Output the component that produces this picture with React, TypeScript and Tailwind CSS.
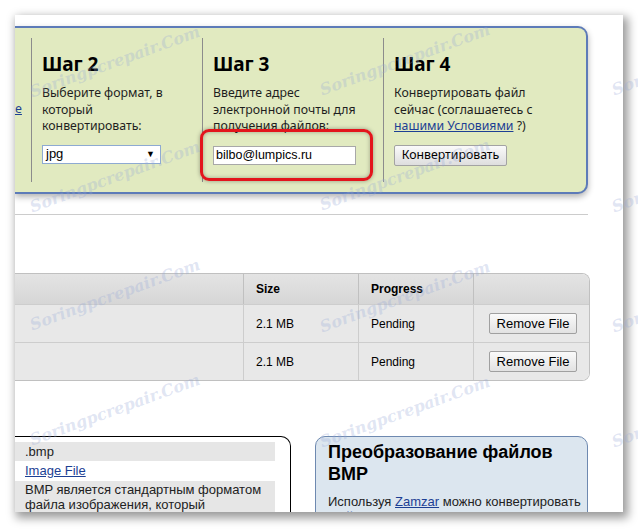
const MARKS: [number, number][] = [
  [115, 62], [115, 177], [115, 295], [115, 410],
  [405, 60], [405, 175], [405, 297], [405, 412],
  [697, 60], [697, 177], [697, 297], [697, 412],
];

const FILES = [
  { size: "2.1 MB", status: "Pending" },
  { size: "2.1 MB", status: "Pending" },
];

function Watermarks() {
  return (
    <>
      {MARKS.map(([x, y], i) => (
        <span
          key={i}
          className="pointer-events-none absolute whitespace-nowrap font-['DejaVu_Serif',serif] text-[16px] font-bold italic text-[rgba(150,168,215,0.3)]"
          style={{ left: x, top: y, transform: "translate(-50%, -50%) rotate(-20deg)" }}
        >
          Soringpcrepair.Com
        </span>
      ))}
    </>
  );
}

function StepHead({ n }: { n: number }) {
  return <h2 className="text-[19px] font-bold leading-[24px] text-black">Шаг {n}</h2>;
}

function Steps() {
  return (
    <div className="relative flex h-[168px] w-[573px] shrink-0 rounded-r-[10px] border-2 border-l-0 border-[#5d7bb8] bg-[#e1eac0] py-[10px] font-['Noto_Sans',sans-serif] text-[12.3px] leading-[16.5px] text-[#1e1e1e] shadow-[0_3px_6px_rgba(0,0,0,0.3)]">
      <div className="w-[16px] pt-[63px]">
        <a className="text-[#1c3f94] underline">e</a>
      </div>

      <div className="w-[171px] border-l border-[#8c8c8c] pl-[10px] pt-[14px]">
        <StepHead n={2} />
        <p className="mt-[9px]">
          Выберите формат, в
          <br />
          который
          <br />
          конвертировать:
        </p>
        <div className="mt-[10px] flex h-[19px] w-[119px] items-center justify-between border border-[#8eaad2] bg-white pl-[3px] pr-[5px] font-['Liberation_Sans',sans-serif] text-[13px] text-black">
          <span>jpg</span>
          <span className="text-[9px] leading-none">▼</span>
        </div>
      </div>

      <div className="w-[181px] border-l border-[#8c8c8c] pl-[10px] pt-[14px]">
        <StepHead n={3} />
        <p className="mt-[9px]">
          Введите адрес
          <br />
          электронной почты для
          <br />
          получения файлов:
        </p>
        <div className="mt-[11px] flex h-[19px] w-[143px] items-center border border-[#a8a8a8] bg-white pl-[2px] font-['Liberation_Sans',sans-serif] text-[12.5px] text-black">
          bilbo@lumpics.ru
        </div>
      </div>

      <div className="flex-1 border-l border-[#8c8c8c] pl-[10px] pt-[14px]">
        <StepHead n={4} />
        <p className="mt-[9px]">
          Конвертировать файл
          <br />
          сейчас (соглашаетесь с
          <br />
          <a className="text-[#1c3f94] underline">нашими Условиями</a> ?)
        </p>
        <button className="mt-[10px] h-[21px] w-[113px] rounded-[2px] border border-[#a3a3a3] bg-gradient-to-b from-[#fafafa] to-[#dedede] text-[12.3px] leading-none text-black">
          Конвертировать
        </button>
      </div>

      {/* red highlight drawn over the e-mail field */}
      <div className="pointer-events-none absolute left-[185px] top-[101px] h-[52px] w-[173px] rounded-[9px] border-[3px] border-[#e3151c] shadow-[0_0_4px_rgba(0,0,0,0.35),inset_0_0_4px_rgba(0,0,0,0.3)]" />
    </div>
  );
}

function FileTable() {
  const cols = "grid grid-cols-[229px_115px_115px_1fr]";
  return (
    <div className="w-[575px] shrink-0 overflow-hidden rounded-r-[8px] border border-l-0 border-[#c0c0c0] font-['Liberation_Sans',sans-serif] text-[12px] text-black">
      <div className={`${cols} h-[30px] bg-gradient-to-b from-[#e4e4e4] to-[#d6d6d6] font-bold`}>
        <div className="border-r border-[#c0c0c0]" />
        <div className="flex items-center border-r border-[#c0c0c0] pl-[12px]">Size</div>
        <div className="flex items-center border-r border-[#c0c0c0] pl-[12px]">Progress</div>
        <div />
      </div>
      {FILES.map((f, i) => (
        <div key={i} className={`${cols} h-[38px] border-t border-[#cdcdcd] bg-[#e8e8e8]`}>
          <div className="border-r border-[#cdcdcd]" />
          <div className="flex items-center border-r border-[#cdcdcd] pl-[12px]">{f.size}</div>
          <div className="flex items-center border-r border-[#cdcdcd] pl-[12px]">{f.status}</div>
          <div className="flex items-center pl-[15px]">
            <button className="h-[21px] w-[88px] rounded-[2px] border border-[#a0a0a0] bg-gradient-to-b from-[#fafafa] to-[#e2e2e2] text-[13px] leading-none">
              Remove File
            </button>
          </div>
        </div>
      ))}
    </div>
  );
}

function InfoBoxes() {
  return (
    <div className="flex shrink-0 gap-[24px] font-['Liberation_Sans',sans-serif] text-[13px] text-[#222]">
      <div className="h-[90px] w-[276px] rounded-tr-[10px] border border-l-0 border-black pr-[15px] pt-[5px]">
        <div className="bg-[#e6e6e6] pl-[10px] leading-[19px]">.bmp</div>
        <div className="pl-[10px] leading-[20px]">
          <a className="text-[#1c3f94] underline">Image File</a>
        </div>
        <div className="bg-[#e6e6e6] pl-[10px] pt-[1px] leading-[15px]">
          BMP является стандартным форматом
          <br />
          файла изображения, который
        </div>
      </div>

      <div className="h-[90px] w-[273px] rounded-[10px] border border-[#6e89b0] bg-[#dce6ef] pl-[12px] pt-[4px]">
        <h3 className="text-[18px] font-bold leading-[22px] text-black">
          Преобразование файлов
          <br />
          BMP
        </h3>
        <p className="mt-[9px] leading-[15px]">
          Используя <a className="text-[#1c3f94] underline">Zamzar</a> можно конвертировать
          <br />
          <a className="text-[#1c3f94] underline">файлы BMP</a> во множество других
        </p>
      </div>
    </div>
  );
}

export default function App() {
  return (
    <div className="relative h-[530px] w-[638px] overflow-hidden bg-white pl-[15px] pt-[15px]">
      <div className="flex h-[497px] w-[608px] flex-col overflow-hidden bg-white pt-[11px] shadow-[3px_4px_9px_2px_rgba(0,0,0,0.4)]">
        <Steps />
        <div className="mt-[20px] h-px w-[573px] shrink-0 bg-[#cccccc]" />
        <div className="mt-[58px] shrink-0">
          <FileTable />
        </div>
        <div className="mt-[55px] shrink-0">
          <InfoBoxes />
        </div>
      </div>
      <Watermarks />
    </div>
  );
}
